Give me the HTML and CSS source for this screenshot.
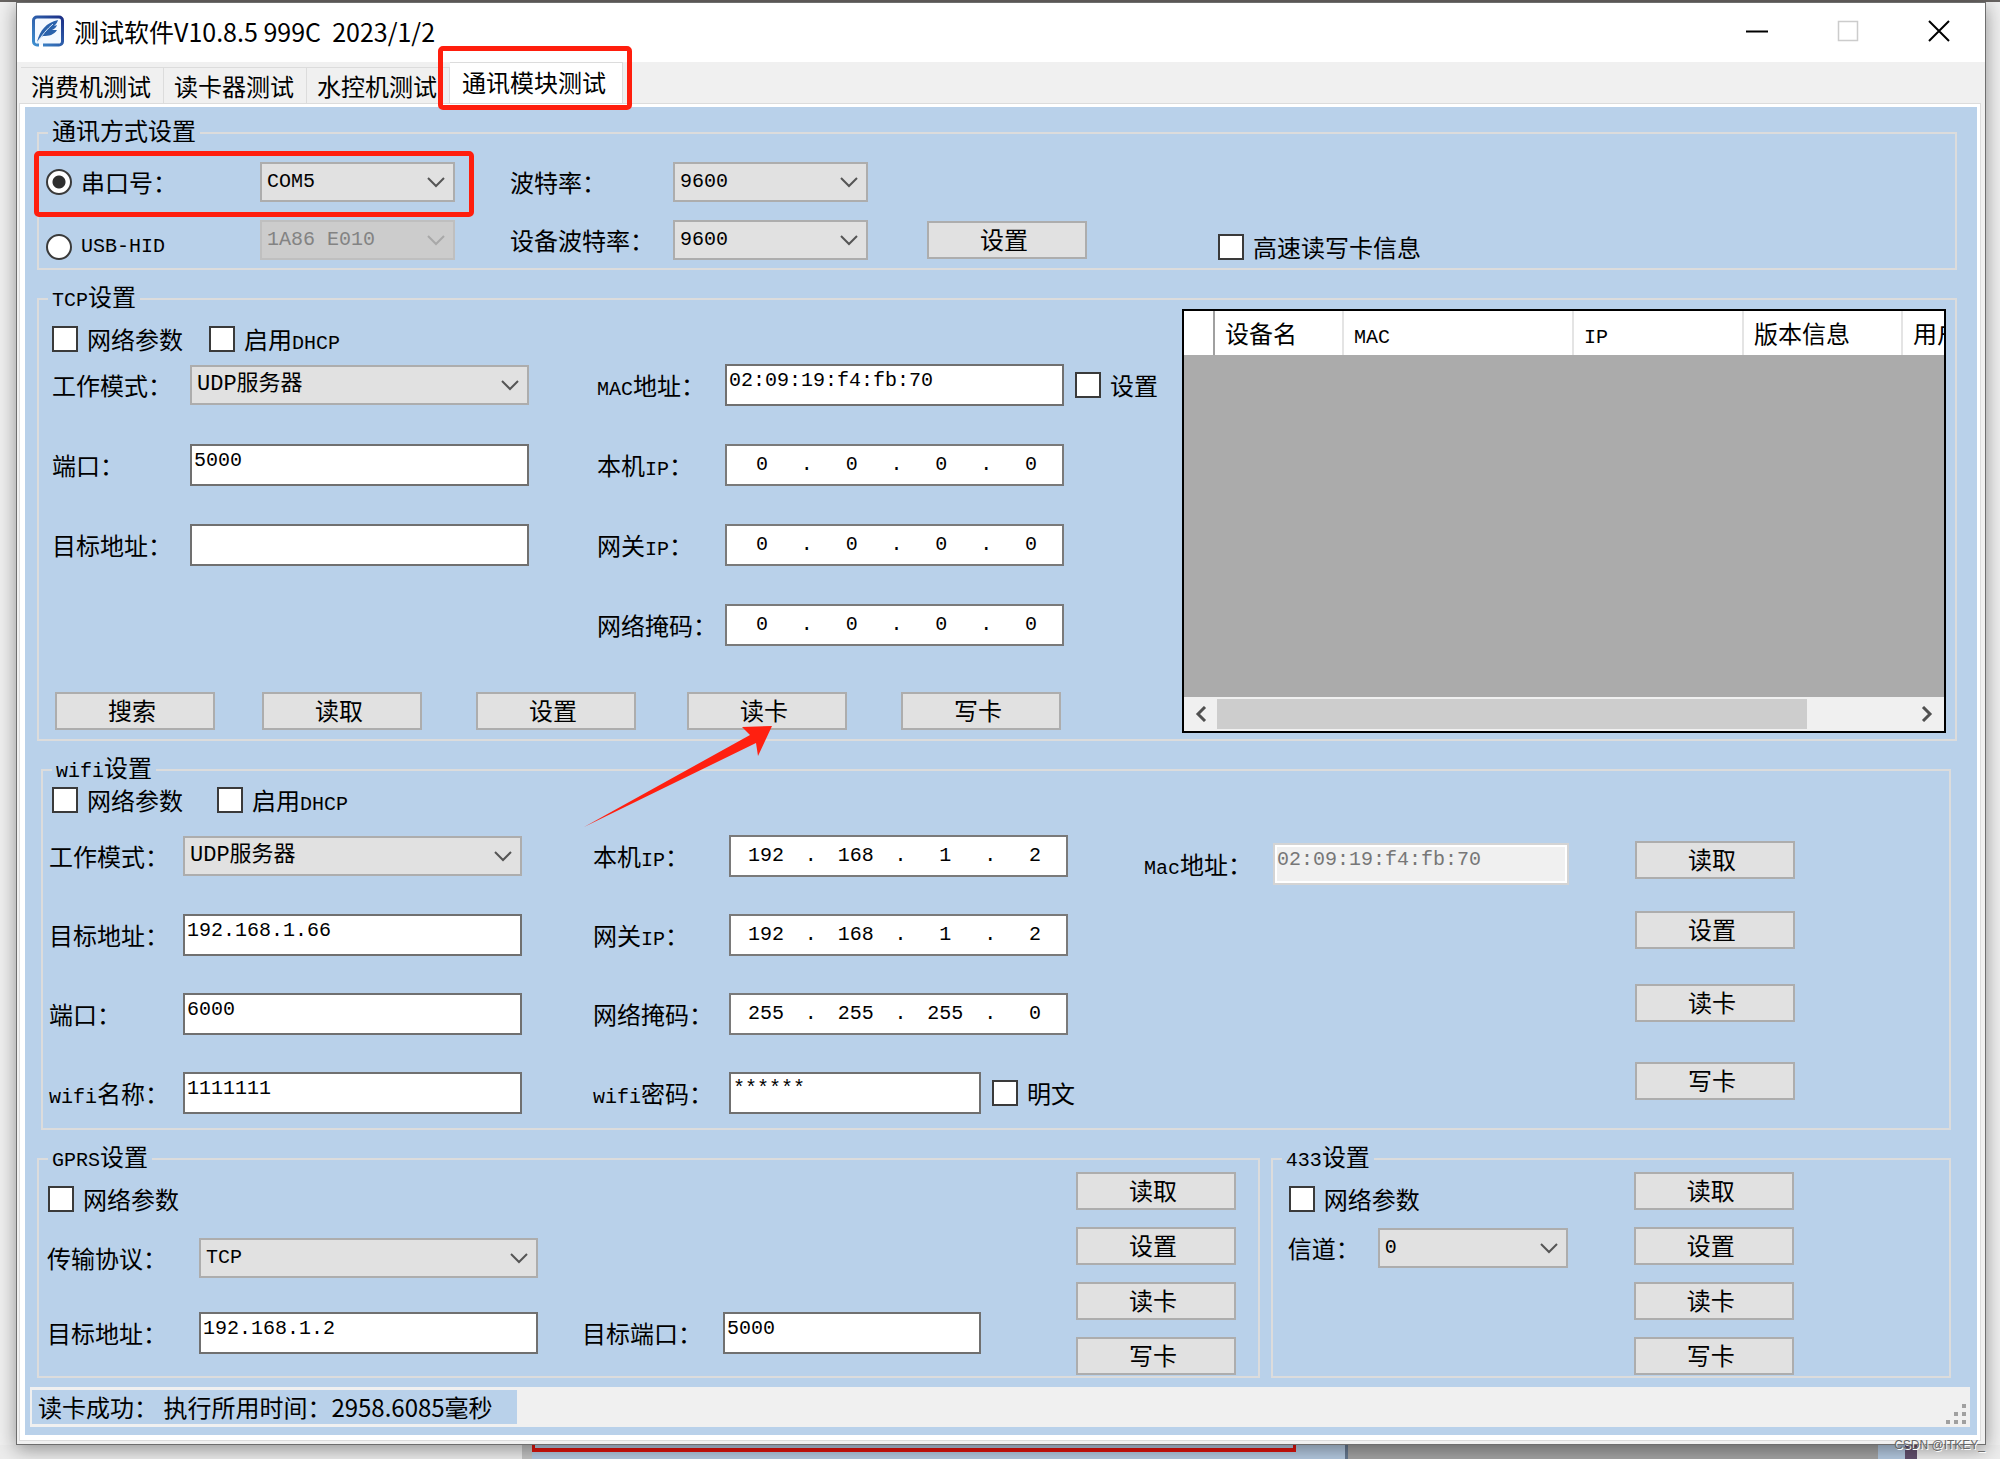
FILE: index.html
```html
<!DOCTYPE html>
<html lang="zh-CN">
<head>
<meta charset="utf-8">
<title>测试软件V10.8.5 999C</title>
<link rel="stylesheet" href="styles.css">
</head>
<body>
<main class="desktop">
<div class="window">
  <header class="titlebar">
    <svg class="app-icon" viewBox="0 0 32 32" aria-hidden="true">
      <defs><linearGradient id="edge" x1="0" y1="1" x2="1" y2="0"><stop offset="0" stop-color="#3f8fd0"/><stop offset="1" stop-color="#1c2f86"/></linearGradient></defs>
      <path d="M7 30H5a3.500 3.500 0 0 1-3.500-3.500V5.500A3.500 3.500 0 0 1 5 2h22a3.500 3.500 0 0 1 3.500 3.500v21A3.500 3.500 0 0 1 27 30H11" fill="#f4f9ff" stroke="url(#edge)" stroke-width="3"/>
      <path d="M5 27C8 15 14 8 26 5c-1 3-2 4-4 6l3-1c-1 3-3 4-5 5l5 0c-3 5-8 6-14 6-2 1-4 3-6 6z" fill="#2a62ab"/>
      <path d="M5 28C10 20 15 14 21 9" fill="none" stroke="#d8eafa" stroke-width="1"/>
    </svg>
    <h1 class="title">测试软件V10.8.5 999C  2023/1/2</h1>
    <button class="win-btn" type="button" aria-label="最小化"><svg viewBox="0 0 22 22"><path d="M0 11.500h22" stroke="#000" stroke-width="2"/></svg></button>
    <button class="win-btn" type="button" aria-label="最大化" disabled><svg viewBox="0 0 22 22"><path d="M1.500 1.500h19v19h-19z" fill="none" stroke="#ccc" stroke-width="1.500"/></svg></button>
    <button class="win-btn" type="button" aria-label="关闭"><svg viewBox="0 0 22 22"><path d="M1 1l20 20M21 1L1 21" stroke="#000" stroke-width="2"/></svg></button>
  </header>

  <nav class="tabs">
    <button class="tab" type="button">消费机测试</button>
    <button class="tab" type="button">读卡器测试</button>
    <button class="tab" type="button">水控机测试</button>
    <button class="tab active" type="button">通讯模块测试<span class="mark mark-tab"></span></button>
  </nav>

  <div class="page">
  <div class="panel">
    <div class="groups">

      <fieldset class="group">
        <legend>通讯方式设置</legend>
        <div class="comm">
          <label class="opt"><input type="radio" name="port" checked>串口号：</label>
          <select class="w-sm" aria-label="串口号"><option>COM5</option></select>
          <label for="baud">波特率：</label>
          <select class="w-sm" id="baud"><option>9600</option></select>
          <span></span>
          <span></span>
          <label class="opt low"><input type="radio" name="port"><span class="en">USB-HID</span></label>
          <select class="w-sm" aria-label="USB-HID" disabled><option>1A86 E010</option></select>
          <label for="devbaud">设备波特率：</label>
          <select class="w-sm" id="devbaud"><option>9600</option></select>
          <button class="btn" type="button">设置</button>
          <label class="opt low"><input type="checkbox">高速读写卡信息</label>
          <span class="mark mark-port"></span>
        </div>
      </fieldset>

      <fieldset class="group">
        <legend><span class="en">TCP</span>设置</legend>
        <div class="tcp">
          <div class="tcp-form">
            <div class="checks">
              <label class="opt"><input type="checkbox">网络参数</label>
              <label class="opt"><input type="checkbox"><span>启用<span class="en">DHCP</span></span></label>
            </div>
            <div class="fields">
              <label for="t-mode">工作模式：</label>
              <select class="w-lg cjk" id="t-mode"><option>UDP服务器</option></select>
              <label for="t-mac"><span class="en">MAC</span>地址：</label>
              <div class="with-opt">
                <input class="text w-lg" id="t-mac" type="text" value="02:09:19:f4:fb:70">
                <label class="opt"><input type="checkbox">设置</label>
              </div>

              <label for="t-port">端口：</label>
              <input class="text w-lg" id="t-port" type="text" value="5000">
              <label for="t-ip">本机<span class="en">IP</span>：</label>
              <div class="ip"><input id="t-ip" value="0"><i>.</i><input value="0" aria-label="2"><i>.</i><input value="0" aria-label="3"><i>.</i><input value="0" aria-label="4"></div>

              <label for="t-addr">目标地址：</label>
              <input class="text w-lg" id="t-addr" type="text">
              <label for="t-gw">网关<span class="en">IP</span>：</label>
              <div class="ip"><input id="t-gw" value="0"><i>.</i><input value="0" aria-label="2"><i>.</i><input value="0" aria-label="3"><i>.</i><input value="0" aria-label="4"></div>

              <span></span>
              <span></span>
              <label for="t-mask">网络掩码：</label>
              <div class="ip"><input id="t-mask" value="0"><i>.</i><input value="0" aria-label="2"><i>.</i><input value="0" aria-label="3"><i>.</i><input value="0" aria-label="4"></div>
            </div>
            <div class="actions">
              <button class="btn" type="button">搜索</button>
              <button class="btn" type="button">读取</button>
              <button class="btn" type="button">设置</button>
              <button class="btn" type="button">读卡</button>
              <button class="btn" type="button">写卡</button>
              <svg class="arrow" viewBox="0 0 192 102" aria-hidden="true"><path d="M1 101L167 9L159 1L189 0L175 30L173 17Z" fill="#ff2010"/></svg>
            </div>
          </div>
          <div class="datagrid">
            <table>
              <thead><tr><th class="c-head"></th><th class="c-name">设备名</th><th class="c-mac"><span class="en">MAC</span></th><th class="c-ip"><span class="en">IP</span></th><th class="c-ver">版本信息</th><th>用户</th></tr></thead>
            </table>
            <div class="hscroll">
              <svg viewBox="0 0 14 16"><path d="M11 1L4 8l7 7" fill="none" stroke="#505050" stroke-width="3"/></svg>
              <div class="track"><div class="thumb"></div></div>
              <svg viewBox="0 0 14 16"><path d="M3 1l7 7-7 7" fill="none" stroke="#505050" stroke-width="3"/></svg>
            </div>
          </div>
        </div>
      </fieldset>

      <fieldset class="group wifi-group">
        <legend><span class="en">wifi</span>设置</legend>
        <div class="wifi">
          <div class="wifi-form">
            <div class="checks">
              <label class="opt"><input type="checkbox">网络参数</label>
              <label class="opt"><input type="checkbox"><span>启用<span class="en">DHCP</span></span></label>
            </div>
            <div class="fields">
              <label for="w-mode">工作模式：</label>
              <select class="w-lg cjk" id="w-mode"><option>UDP服务器</option></select>
              <label for="w-ip">本机<span class="en">IP</span>：</label>
              <div class="ip"><input id="w-ip" value="192"><i>.</i><input value="168" aria-label="2"><i>.</i><input value="1" aria-label="3"><i>.</i><input value="2" aria-label="4"></div>

              <label for="w-addr">目标地址：</label>
              <input class="text w-lg" id="w-addr" type="text" value="192.168.1.66">
              <label for="w-gw">网关<span class="en">IP</span>：</label>
              <div class="ip"><input id="w-gw" value="192"><i>.</i><input value="168" aria-label="2"><i>.</i><input value="1" aria-label="3"><i>.</i><input value="2" aria-label="4"></div>

              <label for="w-port">端口：</label>
              <input class="text w-lg" id="w-port" type="text" value="6000">
              <label for="w-mask">网络掩码：</label>
              <div class="ip"><input id="w-mask" value="255"><i>.</i><input value="255" aria-label="2"><i>.</i><input value="255" aria-label="3"><i>.</i><input value="0" aria-label="4"></div>

              <label for="w-name"><span class="en">wifi</span>名称：</label>
              <input class="text w-lg" id="w-name" type="text" value="1111111">
              <label for="w-pass"><span class="en">wifi</span>密码：</label>
              <div class="with-opt">
                <input class="text w-md" id="w-pass" type="text" value="******">
                <label class="opt"><input type="checkbox">明文</label>
              </div>
            </div>
          </div>
          <div class="mac">
            <label for="w-mac"><span class="en">Mac</span>地址：</label>
            <input class="text" id="w-mac" type="text" value="02:09:19:f4:fb:70" disabled>
          </div>
          <div class="stack">
            <button class="btn" type="button">读取</button>
            <button class="btn" type="button">设置</button>
            <button class="btn" type="button">读卡</button>
            <button class="btn" type="button">写卡</button>
          </div>
        </div>
      </fieldset>

      <div class="pair">
        <fieldset class="group gprs-group">
          <legend><span class="en">GPRS</span>设置</legend>
          <div class="gprs">
            <div>
              <div class="checks"><label class="opt"><input type="checkbox">网络参数</label></div>
              <div class="fields">
                <label for="g-proto">传输协议：</label>
                <select class="w-lg" id="g-proto"><option>TCP</option></select>
                <span></span>
                <span></span>
                <label for="g-addr">目标地址：</label>
                <input class="text w-lg" id="g-addr" type="text" value="192.168.1.2">
                <label for="g-port">目标端口：</label>
                <input class="text w-md" id="g-port" type="text" value="5000">
              </div>
            </div>
            <div class="stack">
              <button class="btn" type="button">读取</button>
              <button class="btn" type="button">设置</button>
              <button class="btn" type="button">读卡</button>
              <button class="btn" type="button">写卡</button>
            </div>
          </div>
        </fieldset>

        <fieldset class="group rf-group">
          <legend><span class="en">433</span>设置</legend>
          <div class="rf">
            <div>
              <div class="checks"><label class="opt"><input type="checkbox">网络参数</label></div>
              <div class="channel">
                <label for="r-ch">信道：</label>
                <select id="r-ch"><option>0</option></select>
              </div>
            </div>
            <div class="stack">
              <button class="btn" type="button">读取</button>
              <button class="btn" type="button">设置</button>
              <button class="btn" type="button">读卡</button>
              <button class="btn" type="button">写卡</button>
            </div>
          </div>
        </fieldset>
      </div>
    </div>

    <footer class="status">
      <span class="status-text">读卡成功： 执行所用时间：2958.6085毫秒</span>
      <svg class="grip" viewBox="0 0 22 22" aria-hidden="true"><path d="M17 1h4v4h-4zM9 9h4v4H9zM17 9h4v4h-4zM1 17h4v4H1zM9 17h4v4H9zM17 17h4v4h-4z" fill="#a0a0a0"/></svg>
    </footer>
  </div>
  </div>
</div>
<div class="behind" aria-hidden="true">
  <span class="b-light"></span><span class="b-edge"></span><span class="b-blue"><span class="b-red"></span></span><span class="b-gray"></span><span class="b-rim"></span><span class="b-dark"></span><span class="b-end"></span>
</div>
<span class="watermark">CSDN @ITKEY_</span>
</main>
</body>
</html>
```
FILE: styles.css
```css
* { box-sizing: border-box; }

body {
  margin: 0;
  background: #f0f0f0;
  color: #000;
  font: 24px/26px "Noto Sans CJK SC", sans-serif;
}

button, input, select { margin: 0; color: inherit; font: inherit; }
svg { display: block; }
.en { font: 20px/0 "Liberation Mono", monospace; }

.desktop {
  position: relative;
  padding-top: 2px;
  background: linear-gradient(#686462 2px, transparent 2px);
  overflow: hidden;
}

.window {
  position: relative;
  margin: 0 14px 0 16px;
  border: 1px solid #6e6e6e;
  background: #f0f0f0;
  box-shadow: 0 4px 18px rgba(0, 0, 0, 0.4);
}

/* title bar */
.titlebar { display: flex; align-items: center; height: 59px; padding: 0 0 4px 15px; background: #fff; }
.app-icon { width: 32px; height: 32px; margin-right: 10px; }
.title { flex: 1; margin: 0; font-size: 25px; font-weight: 400; white-space: pre; }
.win-btn { display: grid; place-items: center; width: 91px; height: 55px; padding: 0 2px 0 0; border: 0; background: none; }
.win-btn svg { width: 22px; height: 22px; }

/* tabs */
.tabs { display: flex; align-items: flex-end; height: 41px; padding-left: 4px; }
.tab {
  width: 143px;
  height: 36px;
  padding: 0 0 0 10px;
  border: 1px solid #dcdcdc;
  border-width: 1px 1px 0 0;
  background: #f0f0f0;
  text-align: left;
  white-space: nowrap;
}
.tab.active { position: relative; z-index: 1; width: 173px; height: 41px; padding: 0 0 3px 12px; background: #fff; }

.mark { position: absolute; border: 5px solid #ff1e0d; border-radius: 5px; pointer-events: none; }
.mark-tab { inset: -17px -10px -7px -12px; }
.mark-port { top: 8px; left: -5px; width: 440px; height: 66px; }

/* page */
.page { margin: 0 4px 3px 2px; padding: 3px 3px 5px 5px; border: 1px solid #dcdcdc; background: #fff; }
.panel { padding: 16px 0 8px; background: #b9d1ea; }
.groups { display: grid; gap: 19px; padding: 0 20px 0 12px; }
.group { min-width: 0; margin: 0; padding: 0; border: 2px solid #dcdcdc; }
.group legend { height: 20px; margin-left: 9px; padding: 0 4px; line-height: 14px; white-space: nowrap; }

/* controls */
label { white-space: nowrap; }
.opt { display: inline-flex; align-items: center; gap: 9px; height: 26px; }
.opt input { appearance: none; flex: none; width: 26px; height: 26px; border: 2px solid #3a3a3a; background: #fff; }
.opt input[type="radio"] { border-radius: 50%; }
.opt input[type="radio"]:checked { background: radial-gradient(circle, #2e2e2e 6px, #fff 7px); }

.btn { width: 160px; height: 38px; padding: 0 6px 2px 0; border: 2px solid #adadad; background: #e1e1e1; line-height: 26px; }

select {
  appearance: none;
  height: 40px;
  padding: 0 40px 0 5px;
  border: 2px solid #adadad;
  border-radius: 0;
  background: #e1e1e1 url("data:image/svg+xml,%3Csvg xmlns='http://www.w3.org/2000/svg' width='18' height='11'%3E%3Cpath d='M1 1l8 8 8-8' fill='none' stroke='%23555' stroke-width='2'/%3E%3C/svg%3E") no-repeat right 8px center;
  font: 20px/26px "Liberation Mono", monospace;
}
select.cjk { font: 22px/26px "Liberation Mono", "Noto Sans CJK SC", monospace; }
select:disabled {
  border-color: #bfbfbf;
  background-color: #ccc;
  background-image: url("data:image/svg+xml,%3Csvg xmlns='http://www.w3.org/2000/svg' width='18' height='11'%3E%3Cpath d='M1 1l8 8 8-8' fill='none' stroke='%23a8a8a8' stroke-width='2'/%3E%3C/svg%3E");
  color: #838383;
  opacity: 1;
}

.text {
  height: 42px;
  padding: 0 2px 10px;
  border: 2px solid #707070;
  background: #fff;
  font: 20px/26px "Liberation Mono", monospace;
}
.text:disabled { border-color: #d4d4d4; background: #f0f0f0; box-shadow: inset 0 0 0 2px #fff; color: #777; }

.ip { display: flex; align-items: center; width: 339px; height: 42px; padding-left: 4px; border: 2px solid #7a7a7a; background: #fff; font: 20px/26px "Liberation Mono", monospace; }
.ip input { width: 62px; padding: 0; border: 0; background: none; text-align: center; }
.ip i { width: 28px; font-style: normal; text-align: center; }

.w-sm { width: 195px; }
.w-md { width: 252px; }
.w-lg { width: 339px; }
.with-opt { display: flex; align-items: center; gap: 11px; }
.checks { display: flex; }
.fields { display: grid; align-items: center; }

/* communication */
.comm {
  position: relative;
  display: grid;
  grid-template-columns: 214px 250px 163px 254px 291px 1fr;
  grid-auto-rows: 40px;
  row-gap: 18px;
  align-items: center;
  padding: 19px 0 8px 7px;
}
.comm .low { align-self: end; }

/* tcp */
.tcp { display: flex; }
.tcp-form { flex: none; width: 1143px; padding: 17px 0 9px 13px; }
.tcp .checks { gap: 26px; }
.tcp .fields { grid-template-columns: 138px 407px 128px 1fr; grid-auto-rows: 42px; row-gap: 38px; margin-top: 12px; }
.actions { position: relative; display: grid; grid-template-columns: 207px 214px 211px 214px 160px; margin-top: 46px; padding-left: 3px; }
.arrow { position: absolute; top: 34px; left: 531px; z-index: 1; width: 192px; height: 102px; }

.datagrid { display: flex; flex: 1; flex-direction: column; justify-content: space-between; min-width: 0; margin: 0 9px 6px 0; border: 2px solid #000; background: #ababab; }
.datagrid table { width: 100%; border-collapse: collapse; table-layout: fixed; background: #fff; }
.datagrid th { height: 44px; padding: 0 0 0 10px; border-right: 2px solid #e4e4e4; overflow: hidden; font-weight: 400; text-align: left; text-overflow: clip; white-space: nowrap; }
.datagrid th:last-child { border-right: 0; }
.datagrid .c-head { width: 30px; border-right-color: #a0a0a0; }
.c-name { width: 129px; }
.c-mac { width: 230px; }
.c-ip { width: 170px; }
.c-ver { width: 159px; }
.hscroll { display: flex; align-items: center; gap: 9px; height: 34px; padding: 0 10px; background: #f0f0f0; }
.hscroll svg { width: 14px; height: 16px; }
.track { flex: 1; height: 30px; }
.thumb { width: 85%; height: 30px; background: #cdcdcd; }

/* wifi */
.wifi-group { margin: 0 6px 0 4px; }
.wifi { display: flex; align-items: flex-start; }
.wifi-form { flex: none; width: 1101px; padding: 7px 0 14px 6px; }
.wifi .checks { gap: 34px; padding-left: 3px; }
.wifi .fields { grid-template-columns: 134px 410px 136px 1fr; grid-auto-rows: 42px; row-gap: 37px; margin-top: 22px; }
.mac { display: flex; flex: none; align-items: center; width: 491px; margin-top: 63px; }
.mac label { width: 129px; }
.mac .text { width: 296px; }
.stack { display: grid; align-content: start; }
.wifi .stack { grid-template-rows: 70px 73px 78px 38px; margin-top: 61px; }

/* gprs and 433 */
.pair { display: flex; gap: 11px; margin-right: 6px; }
.gprs-group { flex: 1224 1 0; }
.rf-group { flex: 679 1 0; }
.gprs, .rf { display: grid; }
.gprs { grid-template-columns: 1037px 1fr; }
.rf { grid-template-columns: 361px 1fr; }
.gprs .checks { padding: 17px 0 0 9px; }
.rf .checks { padding: 17px 0 0 16px; }
.gprs .fields { grid-template-columns: 152px 383px 141px 1fr; grid-auto-rows: 42px; row-gap: 33px; margin-top: 25px; padding-left: 8px; }
.gprs .w-md { width: 258px; }
.pair .stack { row-gap: 17px; padding: 3px 0 1px; }
.channel { display: flex; align-items: center; justify-content: space-between; margin-top: 16px; padding: 0 66px 0 15px; }
.channel select { width: 190px; }

/* status bar */
.status { display: flex; align-items: center; justify-content: space-between; height: 40px; margin: 9px 7px 0 5px; padding: 0 3px 0 2px; background: #f0f0f0; }
.status-text { padding: 4px 24px 4px 6px; background: #b9d1ea; line-height: 26px; white-space: pre; }
.grip { align-self: flex-end; width: 22px; height: 22px; margin-bottom: 2px; }

/* what shows below the window */
.behind { display: flex; height: 15px; }
.b-light { flex: 523; background: #ececec; }
.b-edge { flex: 10; background: #c4c4c4; }
.b-blue { flex: 814; border-right: 3px solid #66788f; background: #b4c9e0; }
.b-red { display: block; width: 94%; height: 7px; border: solid #e0140c; border-width: 0 3px 4px; }
.b-gray { flex: 531; background: #a4a4a4; }
.b-rim { flex: 27; background: #b4c9e0; }
.b-dark { flex: 12; background: #63506e; }
.b-end { flex: 83; background: #ececec; }
.watermark { position: absolute; right: 15px; bottom: 5px; color: #666; font: 12px/20px "Liberation Sans", sans-serif; text-shadow: 1px 1px 0 #fff; }
```
